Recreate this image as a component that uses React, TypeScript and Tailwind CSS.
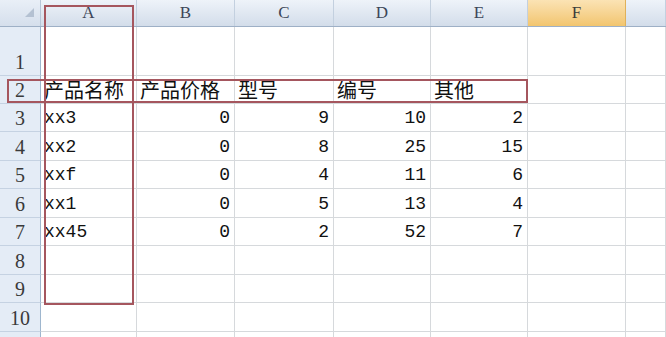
import React from "react";

const cols = [
  { l: "A", w: "w-[96px]" },
  { l: "B", w: "w-[98px]" },
  { l: "C", w: "w-[99px]" },
  { l: "D", w: "w-[97px]" },
  { l: "E", w: "w-[97px]" },
  { l: "F", w: "w-[98px]" },
  { l: "", w: "w-[40px]" },
];
const rowH = [
  "h-[49px]",
  "h-[28px]",
  "h-[28px]",
  "h-[29px]",
  "h-[28px]",
  "h-[29px]",
  "h-[28px]",
  "h-[29px]",
  "h-[28px]",
  "h-[29px]",
  "h-[10px]",
];

type Cell = { t: string; cjk?: boolean; right?: boolean };
const n = (t: string): Cell => ({ t, right: true });
const data: Cell[][] = [
  [],
  [
    { t: "产品名称", cjk: true },
    { t: "产品价格", cjk: true },
    { t: "型号", cjk: true },
    { t: "编号", cjk: true },
    { t: "其他", cjk: true },
  ],
  [{ t: "xx3" }, n("0"), n("9"), n("10"), n("2")],
  [{ t: "xx2" }, n("0"), n("8"), n("25"), n("15")],
  [{ t: "xxf" }, n("0"), n("4"), n("11"), n("6")],
  [{ t: "xx1" }, n("0"), n("5"), n("13"), n("4")],
  [{ t: "xx45" }, n("0"), n("2"), n("52"), n("7")],
  [],
  [],
  [],
  [],
];

export default function App() {
  return (
    <div className="relative w-[666px] h-[337px] overflow-hidden bg-white font-['Liberation_Mono','Noto_Sans_CJK_SC',monospace]">
      {/* column header row */}
      <div className="flex h-[27px] border-b border-[#9eb0c6]">
        <div className="relative w-[41px] shrink-0 bg-gradient-to-b from-[#e9eff7] to-[#d5dfec] border-r border-[#b7c6d8]">
          <div className="absolute right-[6px] bottom-[9px] w-0 h-0 border-l-[9px] border-l-transparent border-b-[9px] border-b-[#b4c1d2]" />
        </div>
        {cols.map((c, i) => (
          <div
            key={i}
            className={
              c.w +
              " shrink-0 flex items-center justify-center text-[17px] border-r font-['Liberation_Serif',serif] " +
              (c.l === "F"
                ? "bg-gradient-to-b from-[#fbe3b4] to-[#f2c56e] text-[#3b3b3b] border-[#e0b15a]"
                : "bg-gradient-to-b from-[#eef3f9] to-[#d3ddea] text-[#3c4658] border-[#c3d0df]")
            }
          >
            {c.l}
          </div>
        ))}
      </div>
      {rowH.map((h, r) => (
        <div key={r} className={"flex " + h}>
          <div className="w-[41px] shrink-0 bg-[#e4ecf6] border-r border-[#9eb6ce] border-b border-b-[#c5d2e2] flex items-end justify-center text-[20px] text-[#3a3a3a] leading-none font-['Liberation_Serif',serif]">
            <span className="mb-[3px]">{r < 10 ? r + 1 : ""}</span>
          </div>
          {cols.map((col, c) => {
            const cell = data[r]?.[c];
            return (
              <div
                key={c}
                className={
                  col.w +
                  " shrink-0 border-r border-b border-[#d6d9dc] flex items-end whitespace-nowrap text-[#111] leading-none " +
                  (cell?.right ? "justify-end pr-[4px]" : "justify-start pl-[3px]")
                }
              >
                {cell ? (
                  cell.cjk ? (
                    <span className="text-[20px] mb-[3px] font-['Noto_Sans_CJK_SC',sans-serif]">{cell.t}</span>
                  ) : (
                    <span className="text-[18px] mb-[4px]">{cell.t}</span>
                  )
                ) : null}
              </div>
            );
          })}
        </div>
      ))}
      {/* red selection outlines */}
      <div className="absolute left-[44px] top-[5px] w-[90px] h-[300px] border-2 border-[#a5565e] pointer-events-none" />
      <div className="absolute left-[7px] top-[79px] w-[521px] h-[24px] border-2 border-[#a5565e] pointer-events-none" />
    </div>
  );
}
